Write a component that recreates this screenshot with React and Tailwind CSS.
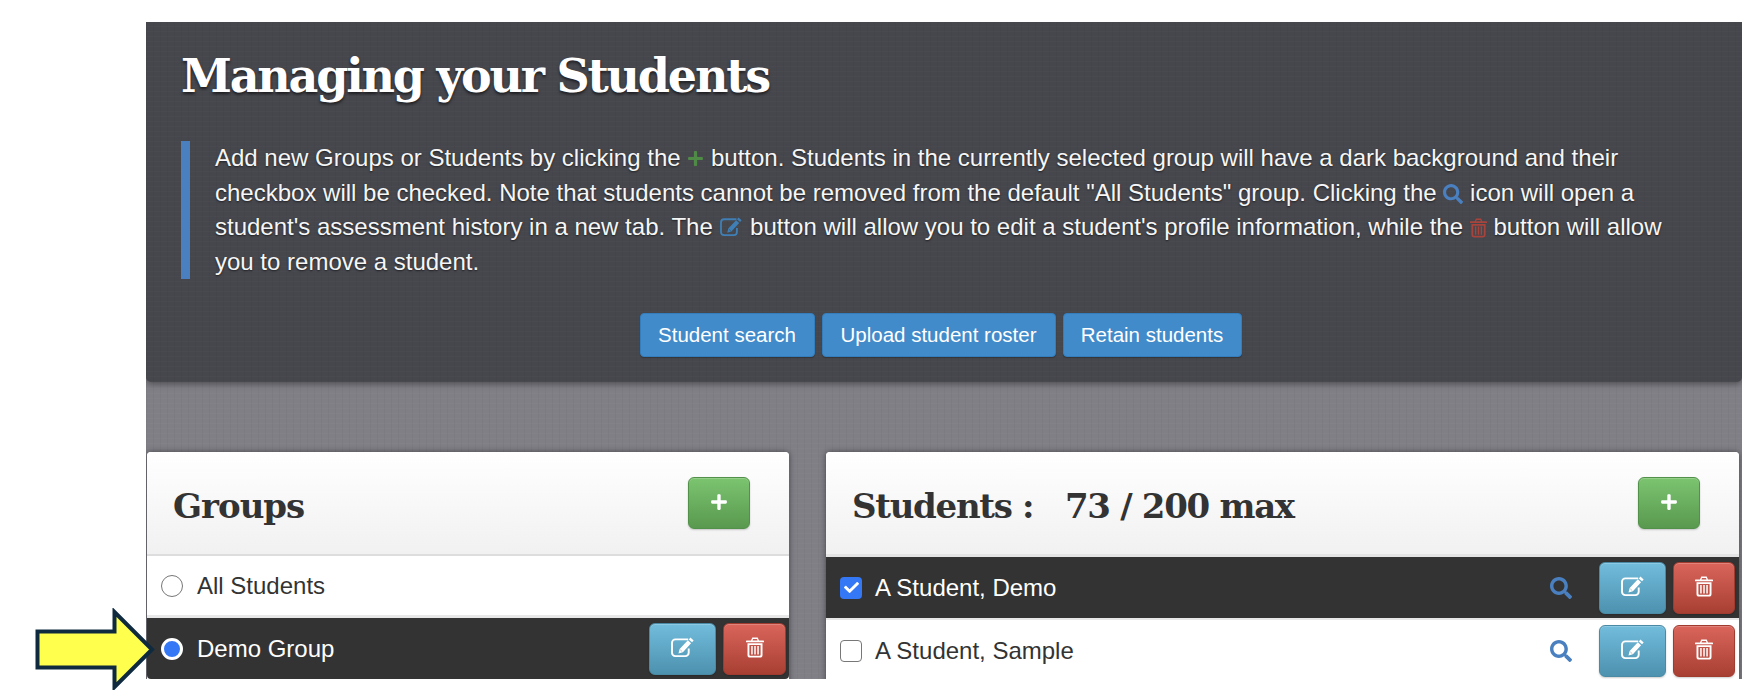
import React from "react";
import { FaPlus, FaSearch, FaCheck } from "react-icons/fa";

const slab = "font-['DejaVu_Serif',serif] font-bold";

function EditIcon({ className }) {
  return (
    <svg viewBox="0 0 26 22" className={className} fill="none" stroke="currentColor">
      <path d="M19 2.5H5.5A3.5 3.5 0 0 0 2 6v10.5A3.5 3.5 0 0 0 5.5 20H16a3.5 3.5 0 0 0 3.5-3.5V12" strokeWidth="2" />
      <path d="M21.3 0.6l3.4 3.1-1.7 1.9-3.4-3.1zM18.6 3.5l3.4 3.1-8.6 9.4-4.6 1.4 1.2-4.7z" fill="currentColor" stroke="none" />
      <path d="M10.6 13.4l2.2 2" stroke="#000" strokeOpacity="0.25" strokeWidth="1" />
    </svg>
  );
}

function TrashIcon({ className }) {
  return (
    <svg viewBox="0 0 18 21" className={className} fill="currentColor">
      <path d="M6.3 0.5h5.4L13 3.4h4.4a.6.6 0 0 1 .6.6v1.2H0V4a.6.6 0 0 1 .6-.6H5zM7 2l-.5 1.4h5L11 2z" />
      <path d="M1.5 6.2h15V18a2.6 2.6 0 0 1-2.6 2.6H4.1A2.6 2.6 0 0 1 1.5 18zM3.4 8V18c0 .5.3.8.8.8h9.6c.5 0 .8-.3.8-.8V8z" />
      <path d="M5.2 9h1.5v8.6H5.2zM8.25 9h1.5v8.6h-1.5zM11.3 9h1.5v8.6h-1.5z" />
    </svg>
  );
}

function Btn({ kind, w, children }) {
  const styles = {
    green: "bg-gradient-to-b from-[#7cc470] to-[#59994f] border-[#52914a]",
    blue: "bg-gradient-to-b from-[#72bcdc] to-[#4d92af] border-[#4a8aa5]",
    red: "bg-gradient-to-b from-[#da655b] to-[#a83f33] border-[#a03b30]",
  };
  return (
    <button className={`${styles[kind]} ${w} h-[52px] shrink-0 rounded-[6px] border flex items-center justify-center text-white shadow-[inset_0_1px_0_rgba(255,255,255,0.2),0_1px_2px_rgba(0,0,0,0.2)]`}>
      {children}
    </button>
  );
}

const Edit = () => <EditIcon className="w-[25px] h-[21px] mb-[3px]" />;
const Trash = () => <TrashIcon className="w-[18px] h-[21px] mb-[3px]" />;

function PanelHeader({ title }) {
  return (
    <div className="h-[102px] bg-gradient-to-b from-white to-[#f1f1f1] flex items-center justify-between pl-[26px] pr-[39px]">
      {title}
      <Btn kind="green" w="w-[62px]"><FaPlus className="w-[18px] h-[18px] mb-[2px]" /></Btn>
    </div>
  );
}

function StudentRow({ dark, name }) {
  return (
    <div className={`${dark ? "bg-[#333333] text-white" : "bg-white text-[#333333]"} h-[61px] flex items-center pl-[14px] pr-[4px]`}>
      {dark ? (
        <span className="w-[22px] h-[22px] rounded-[4px] bg-[#3478f6] flex items-center justify-center text-white shrink-0">
          <FaCheck className="w-[15px] h-[15px]" />
        </span>
      ) : (
        <span className="w-[22px] h-[22px] rounded-[4px] bg-white border-[1.5px] border-[#777777] shrink-0" />
      )}
      <span className="ml-[13px] text-[24px] leading-none flex-1">{name}</span>
      <FaSearch className="w-[22px] h-[22px] text-[#4a80c0] mr-[27px]" />
      <div className="flex gap-[7px]">
        <Btn kind="blue" w="w-[67px]"><Edit /></Btn>
        <Btn kind="red" w="w-[62px]"><Trash /></Btn>
      </div>
    </div>
  );
}

function TopBtn({ children, w }) {
  return (
    <button className={`${w} h-[44px] rounded-[4px] bg-[#428bca] border border-[#357ebd] text-white text-[20.5px] leading-none shadow-[0_1px_1px_rgba(0,0,0,0.25)]`}>
      {children}
    </button>
  );
}

export default function App() {
  return (
    <div className="relative h-[690px] w-full overflow-hidden bg-white pt-[22px] pl-[146px] pr-[18px] font-['Liberation_Sans',Arial,sans-serif]">
      <div className="h-[657px] overflow-hidden bg-[#807f86] bg-[repeating-linear-gradient(0deg,rgba(255,255,255,0.02)_0_1px,transparent_1px_5px),repeating-linear-gradient(90deg,rgba(0,0,0,0.03)_0_1px,transparent_1px_7px)]">
        <section className="h-[360px] rounded-b-[5px] bg-[#46474d] bg-[repeating-linear-gradient(0deg,rgba(255,255,255,0.015)_0_1px,transparent_1px_5px),repeating-linear-gradient(90deg,rgba(0,0,0,0.035)_0_1px,transparent_1px_7px)] pl-[35px] pr-[40px] shadow-[0_2px_6px_rgba(0,0,0,0.4)]">
          <h1 className={`${slab} pt-[22px] text-[46px] leading-[64px] tracking-[-2.2px] text-white [text-shadow:0_2px_3px_rgba(0,0,0,0.6)]`}>
            Managing your Students
          </h1>
          <blockquote className="mt-[33px] border-l-[9px] border-[#4a80c0] pl-[25px] text-[24px] leading-[34.5px] text-[#f6f6f6] [text-shadow:0_1px_2px_rgba(0,0,0,0.6)]">
            Add new Groups or Students by clicking the{" "}
            <FaPlus className="inline-block w-[17px] h-[17px] align-[-1px] text-[#4f8a46]" /> button. Students in the currently selected group will have a dark background and their
            checkbox will be checked. Note that students cannot be removed from the default "All Students" group. Clicking the{" "}
            <FaSearch className="inline-block w-[20px] h-[20px] align-[-3px] text-[#4a80c0]" /> icon will open a
            student's assessment history in a new tab. The{" "}
            <EditIcon className="inline-block w-[24px] h-[20px] align-[-2px] text-[#3f7fb5]" /> button will allow you to edit a student's profile information, while the{" "}
            <TrashIcon className="inline-block w-[17px] h-[20px] align-[-3px] text-[#a9443c]" /> button will allow
            you to remove a student.
          </blockquote>
          <div className="mt-[34px] flex justify-center gap-[7px] pr-[2px]">
            <TopBtn w="w-[175px]">Student search</TopBtn>
            <TopBtn w="w-[234px]">Upload student roster</TopBtn>
            <TopBtn w="w-[179px]">Retain students</TopBtn>
          </div>
        </section>

        <div className="mt-[70px] flex pl-[1px]">
          <div className="w-[642px] h-[240px] rounded-t-[4px] overflow-hidden bg-white shadow-[0_0_6px_rgba(0,0,0,0.45)]">
            <PanelHeader title={<h2 className={`${slab} mt-[5px] text-[34px] leading-none tracking-[-1px] text-[#333333]`}>Groups</h2>} />
            <div className="h-[64px] border-t-2 border-b-[3px] border-t-[#dddddd] border-b-[#e8e8e8] bg-white flex items-center pl-[14px] text-[#333333]">
              <span className="w-[22px] h-[22px] rounded-full border-[1.5px] border-[#777777] bg-white" />
              <span className="ml-[14px] text-[24px] leading-none">All Students</span>
            </div>
            <div className="h-[61px] rounded-b-[4px] bg-[#333333] text-white flex items-center pl-[14px] pr-[3px]">
              <span className="w-[22px] h-[22px] rounded-full bg-[#3478f6] border-[3px] border-white shrink-0" />
              <span className="ml-[14px] text-[24px] leading-none flex-1">Demo Group</span>
              <div className="flex gap-[7px]">
                <Btn kind="blue" w="w-[67px]"><Edit /></Btn>
                <Btn kind="red" w="w-[63px]"><Trash /></Btn>
              </div>
            </div>
          </div>

          <div className="ml-[37px] w-[913px] h-[240px] rounded-t-[4px] overflow-hidden bg-white shadow-[0_0_6px_rgba(0,0,0,0.45)]">
            <PanelHeader
              title={
                <h2 className={`${slab} mt-[5px] text-[34px] leading-none tracking-[-1.3px] text-[#333333] whitespace-pre`}>Students :   73 / 200 max</h2>
              }
            />
            <div className="h-[3px] bg-[#e4e4e4]" />
            <StudentRow dark name="A Student, Demo" />
            <div className="h-[2px] bg-[#e8e8e8]" />
            <StudentRow name="A Student, Sample" />
          </div>
        </div>
      </div>

      <svg className="absolute left-[34px] top-[608px]" width="124" height="82" viewBox="34 608 124 82">
        <path d="M37.5 631.5 H114.5 V612 L152 649.5 L114.5 687 V667.5 H37.5 Z" fill="#ffff4d" stroke="#0f2a3f" strokeWidth="4" />
      </svg>
    </div>
  );
}
